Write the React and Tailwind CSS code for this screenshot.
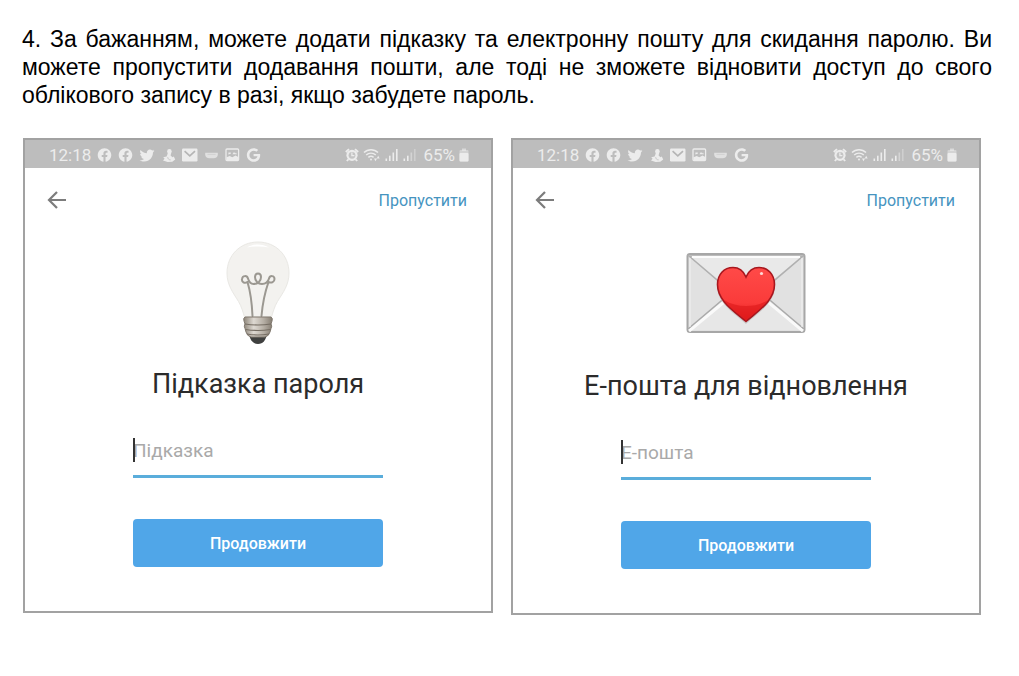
import { FaFacebook, FaTwitter, FaGoogle } from 'react-icons/fa';

function SnapIcon() {
  return (
    <svg viewBox="0 0 15 15" className="h-[15px] w-[15px]" fill="currentColor">
      <circle cx="8.4" cy="3.4" r="2.3" />
      <path d="M7 4.800h3.200L9.600 7.400l1.900 1.900 1.300-.9 1.400 3-2.900 2.400-4.600.3-4.700-1.500 1.600-1.800L2.200 9.200l3.400-.6z" />
      <path d="M6.700 9.200c.2 1.700 1.200 2.700 3 2.700" fill="none" stroke="#bdbdbd" strokeWidth="0.800" />
    </svg>
  );
}

function MailIcon() {
  return (
    <svg viewBox="0 0 16 14" className="h-[14px] w-4">
      <rect x="0" y="0.5" width="15.5" height="13" rx="1.2" fill="currentColor" />
      <path d="M2.6 3.2 7.8 7.8 13 3.2" fill="none" stroke="#b5b5b5" strokeWidth="1.7" />
    </svg>
  );
}

function BadgeIcon() {
  return (
    <svg viewBox="0 0 15 14" className="h-[14px] w-[15px]" fill="currentColor">
      <path d="M1.2 4.8h12.6v2.2c-.5 2.2-2 3.3-4.2 3.3H5.4C3.2 10.3 1.7 9.2 1.2 7z" opacity="0.75" />
      <path d="M3.4 6.4h8.2" stroke="#cccccc" strokeWidth="0.7" />
    </svg>
  );
}

function PictureIcon() {
  return (
    <svg viewBox="0 0 15 14" className="h-[14px] w-[15px]">
      <rect x="1" y="1" width="12.6" height="11.6" rx="1" fill="none" stroke="currentColor" strokeWidth="1.3" />
      <path d="M1.5 12V9.3L4.7 8l2.6 1.2 3.300-1.600 2.700 1.400v3z" fill="currentColor" />
      <path d="M3.400 6.400V4.600h2.400v1.200zM7.400 6.200 9 4l1.200 1.400.8-.8.8 1.600z" fill="currentColor" />
    </svg>
  );
}

function AlarmIcon() {
  return (
    <svg viewBox="0 0 14 14" className="h-[14px] w-[14px]">
      <circle cx="7" cy="7.3" r="5.600" fill="currentColor" />
      <path d="M0.8 4 4 1.1M13.2 4 10 1.1M3.4 11.3 1.8 13M10.6 11.3 12.2 13" stroke="currentColor" strokeWidth="1.8" />
      <circle cx="7" cy="7.3" r="3.4" fill="#c4c4c4" />
      <path d="M6.9 4.500v3.100h2.500" fill="none" stroke="currentColor" strokeWidth="1.300" />
    </svg>
  );
}

function WifiIcon() {
  return (
    <svg viewBox="0 0 18 14" className="h-[14px] w-[18px]" fill="none" stroke="currentColor" strokeWidth="1.4">
      <path d="M1 4.6C4.8.7 11.2.7 15 4.6" />
      <path d="M3.2 7.1c2.7-2.6 6.9-2.6 9.6 0" />
      <path d="M5.4 9.4c1.5-1.3 3.7-1.3 5.2 0" />
      <circle cx="8" cy="11.6" r="1" fill="currentColor" stroke="none" />
      <path d="M11 10.6h3l-1.5 2.6zM13.7 10.4h3l-1.5-2.7z" fill="currentColor" stroke="none" />
    </svg>
  );
}

function SignalIcon({ weak }) {
  return (
    <svg viewBox="0 0 14 14" className="h-[14px] w-[14px]" fill="currentColor">
      <rect x="0.5" y="10.5" width="1.6" height="2.5" />
      <rect x="4" y="7.7" width="1.6" height="5.3" />
      <rect x="7.5" y="4.5" width="1.6" height="8.5" opacity={weak ? 0.5 : 1} />
      <rect x="11" y="1" width="1.6" height="12" opacity={weak ? 0.4 : 1} />
    </svg>
  );
}

function BatteryIcon() {
  return (
    <svg viewBox="0 0 10 14" className="h-[14px] w-[10px]" fill="currentColor">
      <rect x="3" y="0.5" width="4" height="2.5" opacity="0.6" />
      <rect x="0.5" y="2" width="9" height="11.5" rx="1" opacity="0.5" />
      <rect x="0.5" y="5" width="9" height="8.5" rx="1" />
    </svg>
  );
}

function StatusBar({ swapped }) {
  return (
    <div className="flex h-7 items-center justify-between bg-[#bdbdbd] pt-[2px] pr-[22px] pl-6 text-[17px] text-[#ececec]">
      <div className="flex items-center gap-[6px]">
        <span className="leading-5">12:18</span>
        <FaFacebook className="h-[14px] w-[15px]" />
        <FaFacebook className="h-[14px] w-[15px]" />
        <FaTwitter className="h-[15px] w-4" />
        <SnapIcon />
        <MailIcon />
        {swapped ? <PictureIcon /> : <BadgeIcon />}
        {swapped ? <BadgeIcon /> : <PictureIcon />}
        <FaGoogle className="h-[14px] w-[15px]" />
      </div>
      <div className="flex items-center gap-1">
        <AlarmIcon />
        <WifiIcon />
        <SignalIcon />
        <SignalIcon weak />
        <span className="ml-[2px] leading-5">65%</span>
        <BatteryIcon />
      </div>
    </div>
  );
}

function BackArrow() {
  return (
    <svg viewBox="0 0 20 20" className="h-5 w-5" fill="none" stroke="#7c7c7c" strokeWidth="2.2">
      <path d="M19 10H2.5M10 1.900 2 10l8 8.100" />
    </svg>
  );
}

function Bulb() {
  return (
    <svg viewBox="0 0 66 104" className="h-[104px] w-[66px]">
      <defs>
        <linearGradient id="metal" x1="0" x2="1" y1="0" y2="0">
          <stop offset="0" stopColor="#8d8579" />
          <stop offset="0.35" stopColor="#ded9d2" />
          <stop offset="0.7" stopColor="#b5aea4" />
          <stop offset="1" stopColor="#857d72" />
        </linearGradient>
      </defs>
      <path
        d="M33 1C15 1 2 14.5 2 32c0 12 6 19.5 11.5 28.5C16.5 65.5 18 71 19.5 76h27C48 71 49.5 65.5 52.5 60.5 58 51.5 64 44 64 32 64 14.5 51 1 33 1z"
        fill="#f3f2ef"
        stroke="#e9e8e4"
        strokeWidth="1"
      />
      <path d="M22 6.500c7-4 15-4 22 0-7-1.500-15-1.500-22 0z" fill="#fff" />
      <g fill="none" stroke="#9b9891" strokeWidth="2" strokeLinecap="round" strokeLinejoin="round">
        <path d="M27.500 75c-.5-12-2-24-5-34" />
        <path d="M36.500 75c1-12 3.500-24 7-34" />
        <path d="M22.500 41c-3 2-6 0-5.500-3 .5-3.500 5-4 6-.5 1 3.500 2.500 5.500 5.500 5.500 4.500 0 7.500-3 7.500-7 0-2-1-3.500-3-3.500s-3 1.500-3 3.500c0 4 3 7 7 7s6-2 7-5.500c1-3.500 5.500-3 5.500.5 0 3-3 4.500-6 3" />
      </g>
      <path d="M24 93h18c-1 6-4 10-9 10s-8-4-9-10z" fill="#3f403f" />
      <path
        d="M20 76h26q2 1 1 4l-1 3q1.500 2 0 4.500l-1 3.500q-1 4-5 5H26q-4-1-5-5l-1-3.500q-1.500-2.500 0-4.500l-1-3q-1-3 1-4z"
        fill="url(#metal)"
        stroke="#81796f"
        strokeWidth="1"
      />
      <path d="M20 83q13 2 26 0M20.5 88.5q12.5 2 25 0M22 93q11 2 22 0" fill="none" stroke="#756d63" strokeWidth="1.2" />
    </svg>
  );
}

function Envelope() {
  return (
    <svg viewBox="0 0 120 82" className="h-[82px] w-[120px]">
      <defs>
        <linearGradient id="heart" x1="0" x2="0" y1="0" y2="1">
          <stop offset="0" stopColor="#ff4a48" />
          <stop offset="0.65" stopColor="#fa3b3a" />
          <stop offset="1" stopColor="#e31b1c" />
        </linearGradient>
      </defs>
      <rect x="1.5" y="2" width="117" height="78" rx="2.5" fill="#e1e1e1" stroke="#a7a7a7" strokeWidth="2" />
      <path d="M3 78 48 39h24l45 39z" fill="#e7e7e7" />
      <path d="M3 79 49 41M117 79 71 41" stroke="#fafafa" strokeWidth="3" />
      <path d="M2 77 48 38M118 77 72 38" stroke="#aaa" strokeWidth="1.5" />
      <path d="M3 4 50 44q10 7 20 0l47-40z" fill="#e9e9e9" stroke="#b0b0b0" strokeWidth="1.6" />
      <path d="M6 5h108" stroke="#fcfcfc" strokeWidth="2" />
      <path d="M4 6v69M116 6v69" stroke="#f2f2f2" strokeWidth="1" />
      <path d="M60 72C48 61 31 51 31 34c0-10 7-17.5 15.5-17.5 6 0 11 3 13.5 9 2.5-6 7.5-9 13.5-9C82 16.5 89 24 89 34c0 17-17 27-29 38z" fill="#bdbdbd" opacity="0.7" />
      <path
        d="M60 69.500C48 59 31.500 49 31.500 32.500c0-10 6.500-17 15.500-17 6 0 10.500 3.500 13 9.500 2.500-6 7-9.500 13-9.500 9 0 15.500 7 15.500 17C88.500 49 72 59 60 69.500z"
        fill="url(#heart)"
        stroke="#a8171e"
        strokeWidth="1.6"
      />
      <path d="M38 48c13 8 31 8 44 0-5 8-15 14-22 20-7-6-17-12-22-20z" fill="#dc1719" opacity="0.6" />
      <circle cx="75.5" cy="21.5" r="1.6" fill="#ffd9d6" />
    </svg>
  );
}

function PhoneScreen({ id, title, placeholder, type, art, titleGap, swapped }) {
  return (
    <section className="min-w-0 flex-1 border-2 border-[#a2a2a2] bg-white font-[Roboto,sans-serif]">
      <StatusBar swapped={swapped} />
      <div className="flex h-[64px] items-center justify-between pr-6 pl-[22px]">
        <button type="button" aria-label="Назад">
          <BackArrow />
        </button>
        <button type="button" className="pt-[2px] text-base font-normal text-[#4694bf]">Пропустити</button>
      </div>
      <div className="flex h-[122px] items-center justify-center">{art}</div>
      <form className="pb-[44px]" onSubmit={(e) => e.preventDefault()}>
        <h2 className={`${titleGap} text-center text-[27px] leading-9 text-[#2b2b2b]`}>
          <label htmlFor={id}>{title}</label>
        </h2>
        <div className="mx-auto w-[250px]">
          <div className="relative mt-8 border-b-[3px] border-[#5aaddb] pb-2">
            <input
              id={id}
              type={type}
              placeholder={placeholder}
              className="block h-[33px] w-full text-[19px] text-[#222] outline-none placeholder:text-[#a9a9a9]"
            />
            {/* caret */}
            <span className="absolute top-1 left-0 h-6 w-[2px] bg-[#333]" />
          </div>
          <button
            type="submit"
            className="mt-[41px] block h-12 w-full rounded-[4px] bg-[#50a6e8] pt-[2px] text-base font-medium text-white"
          >
            Продовжити
          </button>
        </div>
      </form>
    </section>
  );
}

export default function App() {
  return (
    <main className="bg-white pt-[25px] pr-[27px] pb-[60px] pl-[22px]">
      <p className="text-justify font-['Liberation_Sans',Arial,sans-serif] text-[23px] leading-7 text-black">
        4. За бажанням, можете додати підказку та електронну пошту для скидання паролю. Ви можете пропустити
        додавання пошти, але тоді не зможете відновити доступ до свого облікового запису в разі, якщо забудете
        пароль.
      </p>
      <div className="mt-[29px] mr-[11px] ml-px flex items-start gap-[18px]">
        <PhoneScreen
          id="hint"
          type="text"
          title="Підказка пароля"
          placeholder="Підказка"
          art={<Bulb />}
          titleGap="mt-3"
        />
        <PhoneScreen
          id="email"
          type="email"
          title="Е-пошта для відновлення"
          placeholder="Е-пошта"
          art={<Envelope />}
          titleGap="mt-[14px]"
          swapped
        />
      </div>
    </main>
  );
}
